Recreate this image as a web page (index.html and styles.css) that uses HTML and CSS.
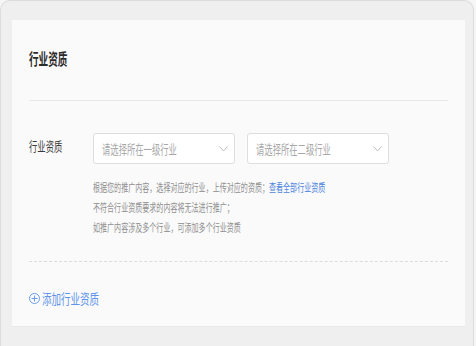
FILE: index.html
```html
<!DOCTYPE html>
<html lang="zh-CN">
<head>
    <meta charset="UTF-8">
    <meta name="viewport" content="width=device-width, initial-scale=1.0">
    <title>行业资质</title>
    <link rel="stylesheet" href="styles.css">
</head>
<body>
    <div class="frame">
        <div class="card">
            <div class="card__head">
                <span class="sq title">行业资质</span>
            </div>

            <div class="row">
                <div class="row__label"><span class="sq">行业资质</span></div>
                <div class="row__body">
                    <div class="selects">
                        <div class="select">
                            <span class="sq">请选择所在一级行业</span>
                            <svg class="chev" width="9" height="6" viewBox="0 0 9 6"><path d="M0.5 0.5 L4.5 5 L8.5 0.5" fill="none" stroke="#bdbdbd" stroke-width="1"/></svg>
                        </div>
                        <div class="select">
                            <span class="sq">请选择所在二级行业</span>
                            <svg class="chev" width="9" height="6" viewBox="0 0 9 6"><path d="M0.5 0.5 L4.5 5 L8.5 0.5" fill="none" stroke="#bdbdbd" stroke-width="1"/></svg>
                        </div>
                    </div>
                    <div class="help">
                        <div><span class="sq">根据您的推广内容，选择对应的行业，上传对应的资质；<a class="link" href="#">查看全部行业资质</a></span></div>
                        <div><span class="sq">不符合行业资质要求的内容将无法进行推广；</span></div>
                        <div><span class="sq">如推广内容涉及多个行业，可添加多个行业资质</span></div>
                    </div>
                </div>
            </div>

            <div class="dash"></div>

            <a class="add" href="#">
                <svg width="11" height="11" viewBox="0 0 11 11"><circle cx="5.5" cy="5.5" r="5" fill="none" stroke="#6b9cec" stroke-width="1"/><path d="M5.5 2.5 V8.5 M2.5 5.5 H8.5" stroke="#6b9cec" stroke-width="1"/></svg>
                <span class="sq sq--add">添加行业资质</span>
            </a>
        </div>
    </div>
</body>
</html>
```

FILE: styles.css
```css
* { box-sizing: border-box; }

body {
    margin: 0;
    background: #f6f6f6;
    font-family: "Noto Sans CJK SC", "Noto Sans", sans-serif;
    color: #333;
    overflow: hidden;
}

.frame {
    width: 474px;
    height: 360px;
    border: 1px solid #dcdcdc;
    border-bottom: none;
    border-radius: 10px 10px 0 0;
    background: #efefef;
    padding: 19px 8px 0 11px;
}

.card {
    background: #fafafa;
    height: 307px;
    padding: 0 17px 18px;
    border-bottom: 1px solid #e9e9e9;
}

/* narrow glyphs like the reference */
.sq {
    display: inline-block;
    white-space: nowrap;
    transform: scaleX(.64);
    transform-origin: left center;
}
.sq--add { transform: scaleX(.68); }

.card__head {
    padding: 28px 0 32px;
    line-height: 20px;
    border-bottom: 1px solid #e8e8e8;
}
.title {
    font-size: 16px;
    font-weight: bold;
    color: #2b2b2b;
    transform: scaleX(.6);
}

.row {
    display: flex;
    margin-top: 32px;
}
.row__label {
    flex: none;
    width: 64px;
    padding-top: 3px;
    font-size: 13px;
    line-height: 20px;
    color: #3a3a3a;
}
.row__body { min-width: 0; }

.selects {
    display: flex;
    gap: 12px;
}
.select {
    flex: none;
    width: 142px;
    height: 31px;
    border: 1px solid #dedede;
    border-radius: 3px;
    background: #fff;
    display: flex;
    align-items: center;
    padding: 0 10px 0 8px;
    font-size: 13px;
    color: #a8a8a8;
    overflow: hidden;
}
.chev { margin-left: auto; flex: none; }

.help {
    margin-top: 13px;
    font-size: 11px;
    line-height: 20px;
    color: #8f8f8f;
}
.link {
    color: #4a84de;
    text-decoration: none;
}

.dash {
    margin-top: 24px;
    border-top: 1px dashed #dcdcdc;
}

.add {
    display: flex;
    align-items: center;
    gap: 2px;
    margin-top: 26px;
    line-height: 20px;
    font-size: 14px;
    color: #5d93ea;
    text-decoration: none;
}
```
